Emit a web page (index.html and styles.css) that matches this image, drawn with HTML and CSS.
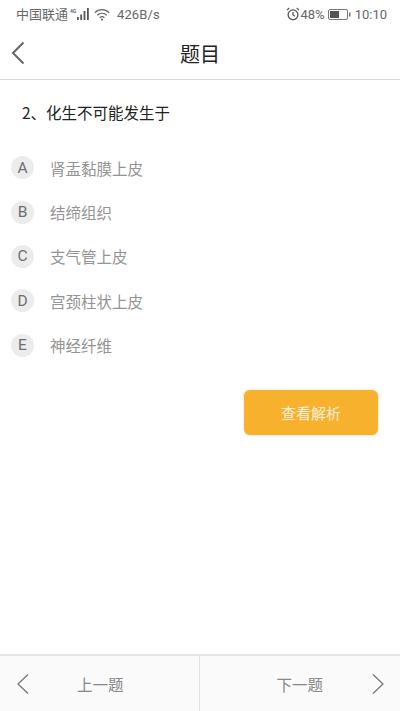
FILE: index.html
```html
<!DOCTYPE html>
<html lang="zh">
<head>
<meta charset="utf-8">
<title>题目</title>
<link rel="stylesheet" href="styles.css">
</head>
<body>
<div class="page">
  <div class="status">
    <div class="status-left">
      <span class="carrier">中国联通</span>
      <svg class="signal" width="21" height="14" viewBox="0 0 21 14"><text x="0" y="6" class="net">4G</text><rect x="7" y="10" width="1.800" height="3"/><rect x="10.300" y="7.500" width="1.800" height="5.500"/><rect x="13.600" y="4" width="1.800" height="9"/><rect x="17" y="1" width="1.800" height="12"/></svg>
      <svg class="wifi" width="16" height="13" viewBox="0 0 16 13"><path d="M.8 4.800C5 .6 11 .6 15.200 4.800M3.200 7.300C6 4.700 10 4.700 12.800 7.300M5.600 9.700C7 8.500 9 8.500 10.400 9.700" fill="none" stroke="#666" stroke-width="1.200"/><circle cx="8" cy="11.600" r="1.100" fill="#666"/></svg>
      <span class="speed">426B/s</span>
    </div>
    <div class="status-right">
      <svg class="alarm" width="14" height="14" viewBox="0 0 14 14"><circle cx="7" cy="7.800" r="4.900" fill="none" stroke="#555" stroke-width="1.300"/><path d="M7 5v3l2 1.200M1 3.200 3.200 1M13 3.200 10.800 1" fill="none" stroke="#555" stroke-width="1.200"/></svg>
      <span class="pct">48%</span>
      <svg class="battery" width="23" height="11" viewBox="0 0 23 11"><rect x=".5" y=".5" width="19" height="10" rx="1.500" fill="none" stroke="#777"/><rect x="2" y="2" width="9" height="7" fill="#555"/><rect x="21" y="3.500" width="1.500" height="4" fill="#777"/></svg>
      <span class="time">10:10</span>
    </div>
  </div>
  <header class="nav">
    <svg class="back" width="14" height="24" viewBox="0 0 14 24"><path d="M12.500 1.500 2 12l10.500 10.500" fill="none" stroke="#666" stroke-width="2"/></svg>
    <h1 class="title">题目</h1>
  </header>
  <main class="content">
    <p class="question">2、化生不可能发生于</p>
    <ul class="options">
      <li class="option"><span class="letter">A</span><span class="text">肾盂黏膜上皮</span></li>
      <li class="option"><span class="letter">B</span><span class="text">结缔组织</span></li>
      <li class="option"><span class="letter">C</span><span class="text">支气管上皮</span></li>
      <li class="option"><span class="letter">D</span><span class="text">宫颈柱状上皮</span></li>
      <li class="option"><span class="letter">E</span><span class="text">神经纤维</span></li>
    </ul>
    <div class="actions"><button class="analysis">查看解析</button></div>
  </main>
  <footer class="footer">
    <div class="pager prev">
      <svg width="12" height="20" viewBox="0 0 12 20"><path d="M11 .5 1 10l10 9.500" fill="none" stroke="#777" stroke-width="1.300"/></svg>
      <span class="pager-label">上一题</span>
    </div>
    <div class="pager next">
      <span class="pager-label">下一题</span>
      <svg width="12" height="20" viewBox="0 0 12 20"><path d="M1 .5 11 10 1 19.500" fill="none" stroke="#777" stroke-width="1.300"/></svg>
    </div>
  </footer>
</div>
</body>
</html>
```
FILE: styles.css
```css
* { box-sizing: border-box; }
html, body { margin: 0; padding: 0; }
body { font-family: "Noto Sans CJK SC", Roboto, sans-serif; background: #fff; }
.page { width: 400px; height: 711px; display: flex; flex-direction: column; overflow: hidden; }
.status { height: 28px; display: flex; justify-content: space-between; align-items: center; padding: 0 13px 0 16px; font-family: Roboto, "Noto Sans CJK SC", sans-serif; font-size: 13px; color: #666; }
.status-left, .status-right { display: flex; align-items: center; }
.carrier { font-family: "Noto Sans CJK SC", sans-serif; font-size: 13px; line-height: 16px; }
.signal { margin-left: 2px; fill: #555; }
.net { font-size: 5px; font-weight: 700; fill: #666; }
.wifi { margin-left: 3px; }
.speed { margin-left: 7px; font-size: 13px; letter-spacing: .1px; }
.pct { margin-left: 0; }
.battery { margin-left: 3px; }
.time { margin-left: 4px; font-size: 13px; }
.nav { height: 52px; position: relative; display: flex; align-items: center; justify-content: center; border-bottom: 1px solid #d9d9d9; }
.back { position: absolute; left: 11px; top: 13px; }
.title { margin: 0; font-size: 20px; font-weight: 400; color: #222; line-height: 26px; }
.content { flex: 1; }
.question { margin: 0; padding: 21px 0 0 22px; font-size: 15.500px; line-height: 22px; color: #222; }
.options { list-style: none; margin: 22.500px 0 0; padding: 0 0 0 11px; }
.option { height: 44.400px; display: flex; align-items: center; }
.letter { width: 23px; height: 23px; border-radius: 50%; background: #ececec; color: #6e6e6e; font-family: Roboto, sans-serif; font-size: 15.500px; display: flex; align-items: center; justify-content: center; }
.text { margin-left: 16px; font-size: 15.500px; color: #949494; }
.actions { display: flex; justify-content: flex-end; padding: 23px 22px 0 0; }
.analysis { width: 134px; height: 45px; border: 0; border-radius: 6px; background: #f8b12c; color: #fdf3dc; font-family: "Noto Sans CJK SC", sans-serif; font-size: 15px; box-shadow: 0 0 2px rgba(200,150,50,.5); padding: 0; }
.footer { height: 57px; display: flex; background: #fafafa; border-top: 2px solid #e6e6e6; }
.pager { display: flex; align-items: center; color: #888; font-size: 15.500px; }
.prev { width: 200px; padding-left: 17px; border-right: 1px solid #e2e2e2; }
.prev .pager-label { margin-left: 48px; }
.next { width: 200px; padding-right: 16px; justify-content: flex-end; }
.next .pager-label { margin-right: 49px; }
```
